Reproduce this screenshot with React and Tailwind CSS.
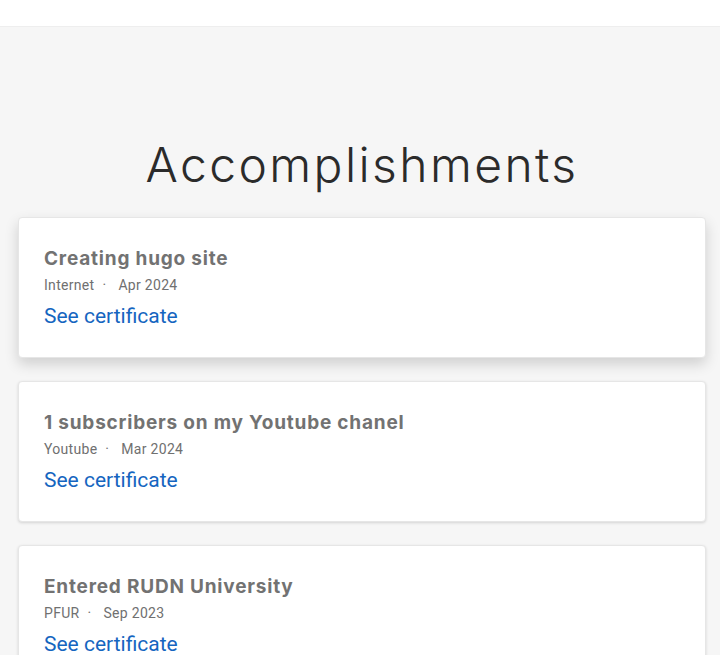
const items = [
  { title: 'Creating hugo site', org: 'Internet', date: 'Apr 2024', hovered: true },
  { title: '1 subscribers on my Youtube chanel', org: 'Youtube', date: 'Mar 2024' },
  { title: 'Entered RUDN University', org: 'PFUR', date: 'Sep 2023' },
];

const App = () => {
  return (
    <div className="min-h-screen bg-[#f6f6f6]">
      <div className="h-[27px] bg-white border-b border-[#eeeeee]"></div>

      <section className="pt-[108px]">
        <h1 className="text-center text-[48px] leading-[60px] font-light tracking-[2.4px] text-[#2b2b2b] font-['Inter',sans-serif] mb-[22px] pl-[4px]">
          Accomplishments
        </h1>

        <div className="flex flex-col gap-[23px] pl-[18px] pr-[14px] pb-10">
          {items.map(item => (
            <div
              key={item.title}
              className={`bg-white rounded-[4px] border border-[#e6e6e6] h-[141px] px-[25px] pt-[27px] ${
                item.hovered
                  ? 'shadow-[0_6px_14px_rgba(0,0,0,0.16)]'
                  : 'shadow-[0_1px_3px_rgba(0,0,0,0.14)]'
              }`}
            >
              <h3 className="text-[19px] leading-[28px] font-bold tracking-[0.8px] text-[#727272] font-['Inter',sans-serif]">
                {item.title}
              </h3>
              <div className="mt-[2px] text-[14px] leading-[20px] tracking-[0.3px] text-[#707070] font-['Roboto',sans-serif] flex items-center">
                <span>{item.org}</span>
                <span className="ml-[8px] mr-[12px]">·</span>
                <span>{item.date}</span>
              </div>
              <a href="#" className="block mt-[7px] text-[21px] leading-[28px] text-[#1565c0] font-['Roboto',sans-serif]">
                See certificate
              </a>
            </div>
          ))}
        </div>
      </section>
    </div>
  );
};

export default App;
